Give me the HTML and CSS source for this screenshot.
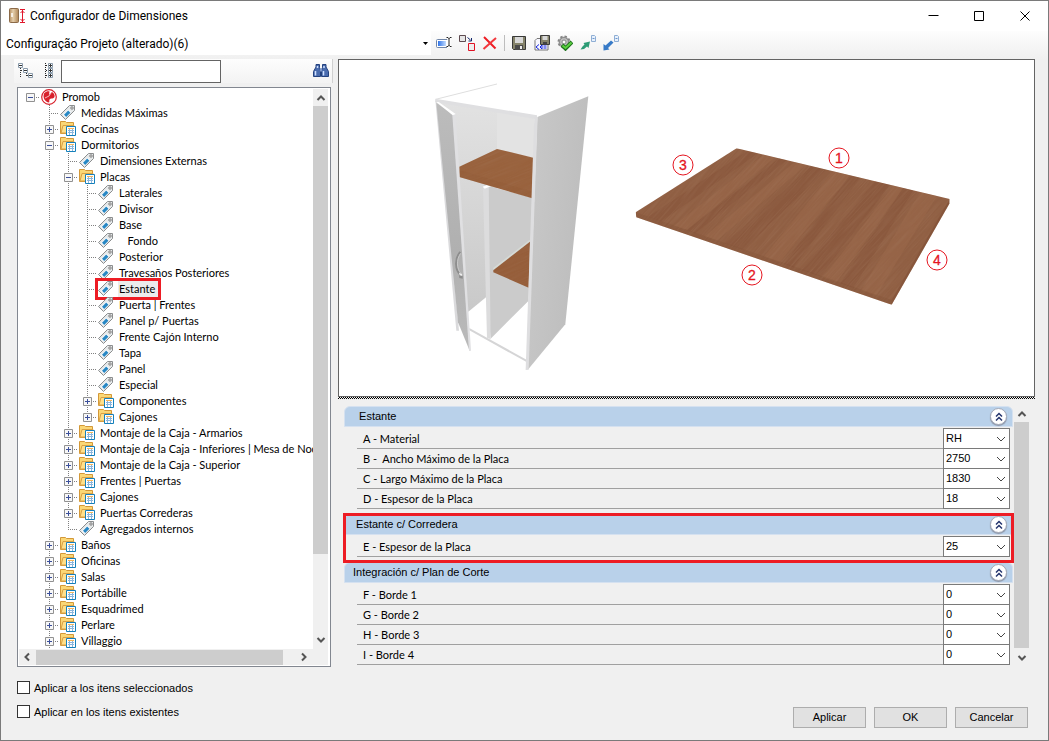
FILE: index.html
```html
<!DOCTYPE html>
<html lang="es">
	<head>
		<meta charset="UTF-8">
		<title>Configurador de Dimensiones</title>
		<link rel="stylesheet" href="styles.css">
	</head>
	<body>
		<!-- shared icons -->
		<svg class="sprite" aria-hidden="true">
			<symbol id="tag" viewBox="0 0 16 16">
				<path d="M9.500 .5h5v5L5.500 14.500 .5 9.500z" fill="#e6e9ea" stroke="#8b8d8e"/>
				<path d="M3 10L8.500 4.500l2.500 2.500-5.500 5.500z" fill="#fff"/>
				<path d="M4 9.800L8.200 5.500l2.200 2.200-4.200 4.300z" fill="#2787c4"/>
				<circle cx="12" cy="3" r="1.200" fill="#fff" stroke="#777"/>
			</symbol>
			<symbol id="folder" viewBox="0 0 16 16">
				<path d="M.5 12.500v-12h5l1 1h7v11z" fill="#fbd775" stroke="#d39838"/>
				<path d="M1 12l2-7.500h11l-1 7.500z" fill="#ffe08a" stroke="#d9a145"/>
				<path d="M6.500 5.500h9v9h-9z" fill="#fff" stroke="#1580bb"/>
				<path d="M8 7h6v1H8z" fill="#f2b55c"/>
				<path d="M8 9.500h6M8 11.500h6M9.500 8v6M12.500 8v6" stroke="#8bb6dc"/>
			</symbol>
			<symbol id="plus" viewBox="0 0 9 9">
				<path d="M.5.5h8v8h-8z" fill="#f7f7f7" stroke="#919191"/>
				<path d="M2 4.500h5M4.500 2v5" stroke="#3b4f9a"/>
			</symbol>
			<symbol id="minus" viewBox="0 0 9 9">
				<path d="M.5.5h8v8h-8z" fill="#f7f7f7" stroke="#919191"/>
				<path d="M2 4.500h5" stroke="#3b4f9a"/>
			</symbol>
			<symbol id="chevron" viewBox="0 0 10 6">
				<path d="M1 1l4 4 4-4" fill="none" stroke="#444"/>
			</symbol>
			<symbol id="arrow" viewBox="0 0 10 6">
				<path d="M1.500 5L5 1.500 8.500 5" fill="none" stroke="#555" stroke-width="2"/>
			</symbol>
			<symbol id="collapse" viewBox="0 0 10 10">
				<path d="M2 4.500l3-3 3 3M2 8.500l3-3 3 3" fill="none" stroke="#25356e" stroke-width="1.500"/>
			</symbol>
		</svg>

		<div class="window">
			<header class="titlebar">
				<svg class="app-icon" viewBox="0 0 16 16">
					<defs><linearGradient id="door"><stop offset="0" stop-color="#b58f63"/><stop offset=".4" stop-color="#e5cfac"/><stop offset="1" stop-color="#ae8556"/></linearGradient></defs>
					<rect x=".5" y=".5" width="9" height="14" rx="1" fill="url(#door)" stroke="#8b6a48"/>
					<path d="M3 5v4" stroke="#fff" stroke-width="1.500"/>
					<path d="M11 1.500h5M11 14.500h5M13.500 2v12M11.500 5l2-2 2 2M11.500 11l2 2 2-2" fill="none" stroke="#e0162b"/>
				</svg>
				<h1 class="title">Configurador de Dimensiones</h1>
				<button class="win-btn" aria-label="Minimizar"><svg viewBox="0 0 11 11"><path d="M.5 4.500h10" stroke="#000"/></svg></button>
				<button class="win-btn" aria-label="Maximizar"><svg viewBox="0 0 11 11"><path d="M.5.5h9v9h-9z" fill="none" stroke="#000"/></svg></button>
				<button class="win-btn" aria-label="Cerrar"><svg viewBox="0 0 11 11"><path d="M.5.5l9 9M9.500.5l-9 9" stroke="#000"/></svg></button>
			</header>

			<div class="toolbar">
				<div class="config">
					<select class="config-select" aria-label="Configuração"><option>Configuração Projeto (alterado)(6)</option></select>
					<svg class="config-arrow" viewBox="0 0 5 3"><path d="M0 0h5L2.500 3z"/></svg>
				</div>
				<button class="tool" aria-label="Renombrar"><svg viewBox="0 0 16 16"><defs><linearGradient id="blue"><stop offset="0" stop-color="#2f74e8"/><stop offset="1" stop-color="#c3dcff"/></linearGradient></defs><rect x=".5" y="4.500" width="13" height="8" rx="1" fill="#fff" stroke="#7186a8"/><path d="M2 6h8v5H2z" fill="url(#blue)"/><path d="M11 3h4M11 11.500h4M13 3v8" stroke="#fff" stroke-width="3"/><path d="M10.500 2.500h1.500l1 1 1-1h1.500M10.500 11.500h1.500l1-1 1 1h1.500M13 3v8" fill="none" stroke="#222"/></svg></button>
				<button class="tool" aria-label="Reemplazar"><svg viewBox="0 0 16 16"><path d="M.5.5h6v6h-6z" fill="#e6e6e6" stroke="#5e4b50"/><path d="M9.500 8.500h6v7h-6z" fill="#eee" stroke="#e01224"/><path d="M8.500 2.500l3 2.500M12.500 3v3h-3" fill="none" stroke="#14286d"/></svg></button>
				<button class="tool" aria-label="Eliminar"><svg viewBox="0 0 16 16"><path d="M2 2l11.500 11.500" stroke="#ee1b22" stroke-width="2"/><path d="M14 3L1.500 14" stroke="#f2363b" stroke-width="2"/></svg></button>
				<span class="tool-sep"></span>
				<button class="tool" aria-label="Guardar"><svg viewBox="0 0 16 16"><path d="M1.500 1.500h13v13h-12l-1-1z" fill="#85836a" stroke="#383838"/><path d="M4 2h8v6H4z" fill="#d8d8d8"/><path d="M4 10h8v5H4z" fill="#4a4a4a"/><path d="M9 11h2v3H9z" fill="#eee"/></svg></button>
				<button class="tool" aria-label="Guardar como"><svg viewBox="0 0 16 16"><path d="M1 5.500l2-2h11v11.500H1z" fill="#f7f7ff" stroke="#777"/><path d="M6.500.5h9v9h-9z" fill="#85836a" stroke="#3c3c3c"/><path d="M8.500 1h5v4h-5z" fill="#d8d8d8"/><path d="M9 7h4v2.500H9z" fill="#444"/><path d="M5 9.500l-3 2.500 3 2.500M6 12l2-2v4zM9.500 11h3M9.500 13h3" fill="none" stroke="#1526e2"/></svg></button>
				<button class="tool" aria-label="Aplicar configuración"><svg viewBox="0 0 16 16"><circle cx="7" cy="7" r="5.500" fill="#b5b5b5" stroke="#858585" stroke-width="2" stroke-dasharray="2.300 2"/><circle cx="7" cy="7" r="4.500" fill="#bdbdbd" stroke="#8b8b8b"/><circle cx="7" cy="7" r="2" fill="#fff" stroke="#888"/><path d="M5 10l3.500 3.500L15 7" fill="none" stroke="#1e721d" stroke-width="4"/><path d="M5.500 10.500l3 2.500L14.500 7.500" fill="none" stroke="#5bd13f" stroke-width="2"/></svg></button>
				<button class="tool" aria-label="Exportar"><svg viewBox="0 0 16 16"><path d="M.5 14.500l2-3 2-2-1-1.500 6.500-1.500-1.500 6.500L7 11.500l-3 2.500z" fill="#2d9c75"/><path d="M11.500.5h3l1 1v5h-4z" fill="#e8f1fc" stroke="#8faed4"/><path d="M12.500 3.500h2" stroke="#6e97ce"/></svg></button>
				<button class="tool" aria-label="Importar"><svg viewBox="0 0 16 16"><path d="M.5 15.500V9l2 1.500L8 5.500l2.500 2L5 13l1.500 1.500z" fill="#377ac7"/><path d="M11.500.5h3l1 1v5h-4z" fill="#e8f1fc" stroke="#8faed4"/><path d="M12.500 3.500h2" stroke="#6e97ce"/></svg></button>
			</div>

			<main class="main">
				<section class="side">
					<div class="searchbar">
						<button class="tool" aria-label="Contraer todo"><svg viewBox="0 0 16 16"><path d="M2.500 5v10M3 7.500h4M8.500 10v4M9 12.500h3" fill="none" stroke="#333" stroke-dasharray="1 1"/><path d="M.5.5h4v4h-4zM5.500 5.500h4v4h-4zM10.500 10.500h4v4h-4z" fill="#fff" stroke="#8a9bab"/><path d="M1 2.500h3M6 7.500h3M11 12.500h3" stroke="#333"/></svg></button>
						<button class="tool" aria-label="Expandir todo"><svg viewBox="0 0 16 16"><path d="M4.500 0v16M5 2.500h3M5 7.500h3M5 12.500h3" fill="none" stroke="#222" stroke-dasharray="1 1"/><path d="M7.500.5h4v4h-4zM7.500 5.500h4v4h-4zM7.500 10.500h4v4h-4z" fill="#fff" stroke="#8a9bab"/><path d="M8 2.500h3M8 7.500h3M8 12.500h3M9.500 1v3M9.500 6v3M9.500 11v3" stroke="#333"/></svg></button>
						<input class="search" type="text" aria-label="Buscar">
						<button class="tool tool--find" aria-label="Buscar siguiente"><svg viewBox="0 0 16 16"><path d="M3 1.500h3.500v3L7.500 7v6.500h-7v-5L3 4zM9.500 1.500H13V4l2.500 4.500v5h-7V7l1-2.500z" fill="#4a6cae" stroke="#24427f"/><path d="M7 5.500h2v3H7z" fill="#7e97c8"/><path d="M2.500 8v4.500M10.500 8v4.500M4.500 3v2M11 3v2" stroke="#cfe0ff" stroke-width="1.500"/></svg></button>
					</div>

					<div class="tree-box">
						<div class="tree-view">
							<ul class="tree">
								<li class="root"><div class="row"><span class="twig"><svg><use href="#minus"/></svg></span><span class="node"><svg viewBox="0 0 16 16"><circle cx="8" cy="8" r="7.300" fill="#fff" stroke="#d8202b" stroke-width="1.200"/><path d="M3 4.500C5 2 8 2 8.500 2.500L8 6l3-3c2 1 3 3 2.500 5-1 2-3 1-4.500 2s0 3-1 3.500C4 13 1.500 9 3 4.500z" fill="#d8202b"/><path d="M4 9l4-2 2-3" fill="none" stroke="#f7b7ba"/></svg><span class="label">Promob</span></span></div>
									<ul>
										<li><div class="row"><span class="twig"></span><span class="node"><svg><use href="#tag"/></svg><span class="label">Medidas Máximas</span></span></div></li>
										<li><div class="row"><span class="twig"><svg><use href="#plus"/></svg></span><span class="node"><svg><use href="#folder"/></svg><span class="label">Cocinas</span></span></div></li>
										<li><div class="row"><span class="twig"><svg><use href="#minus"/></svg></span><span class="node"><svg><use href="#folder"/></svg><span class="label">Dormitorios</span></span></div>
											<ul>
												<li><div class="row"><span class="twig"></span><span class="node"><svg><use href="#tag"/></svg><span class="label">Dimensiones Externas</span></span></div></li>
												<li><div class="row"><span class="twig"><svg><use href="#minus"/></svg></span><span class="node"><svg><use href="#folder"/></svg><span class="label">Placas</span></span></div>
													<ul>
														<li><div class="row"><span class="twig"></span><span class="node"><svg><use href="#tag"/></svg><span class="label">Laterales</span></span></div></li>
														<li><div class="row"><span class="twig"></span><span class="node"><svg><use href="#tag"/></svg><span class="label">Divisor</span></span></div></li>
														<li><div class="row"><span class="twig"></span><span class="node"><svg><use href="#tag"/></svg><span class="label">Base</span></span></div></li>
														<li><div class="row"><span class="twig"></span><span class="node"><svg><use href="#tag"/></svg><span class="label">   Fondo</span></span></div></li>
														<li><div class="row"><span class="twig"></span><span class="node"><svg><use href="#tag"/></svg><span class="label">Posterior</span></span></div></li>
														<li><div class="row"><span class="twig"></span><span class="node"><svg><use href="#tag"/></svg><span class="label">Travesaños Posteriores</span></span></div></li>
														<li><div class="row"><span class="twig"></span><span class="node marked"><svg><use href="#tag"/></svg><span class="label selected">Estante</span></span></div></li>
														<li><div class="row"><span class="twig"></span><span class="node"><svg><use href="#tag"/></svg><span class="label">Puerta | Frentes</span></span></div></li>
														<li><div class="row"><span class="twig"></span><span class="node"><svg><use href="#tag"/></svg><span class="label">Panel p/ Puertas</span></span></div></li>
														<li><div class="row"><span class="twig"></span><span class="node"><svg><use href="#tag"/></svg><span class="label">Frente Cajón Interno</span></span></div></li>
														<li><div class="row"><span class="twig"></span><span class="node"><svg><use href="#tag"/></svg><span class="label">Tapa</span></span></div></li>
														<li><div class="row"><span class="twig"></span><span class="node"><svg><use href="#tag"/></svg><span class="label">Panel</span></span></div></li>
														<li><div class="row"><span class="twig"></span><span class="node"><svg><use href="#tag"/></svg><span class="label">Especial</span></span></div></li>
														<li><div class="row"><span class="twig"><svg><use href="#plus"/></svg></span><span class="node"><svg><use href="#folder"/></svg><span class="label">Componentes</span></span></div></li>
														<li class="last"><div class="row"><span class="twig"><svg><use href="#plus"/></svg></span><span class="node"><svg><use href="#folder"/></svg><span class="label">Cajones</span></span></div></li>
													</ul>
												</li>
												<li><div class="row"><span class="twig"><svg><use href="#plus"/></svg></span><span class="node"><svg><use href="#folder"/></svg><span class="label">Montaje de la Caja - Armarios</span></span></div></li>
												<li><div class="row"><span class="twig"><svg><use href="#plus"/></svg></span><span class="node"><svg><use href="#folder"/></svg><span class="label">Montaje de la Caja - Inferiores | Mesa de Noche</span></span></div></li>
												<li><div class="row"><span class="twig"><svg><use href="#plus"/></svg></span><span class="node"><svg><use href="#folder"/></svg><span class="label">Montaje de la Caja - Superior</span></span></div></li>
												<li><div class="row"><span class="twig"><svg><use href="#plus"/></svg></span><span class="node"><svg><use href="#folder"/></svg><span class="label">Frentes | Puertas</span></span></div></li>
												<li><div class="row"><span class="twig"><svg><use href="#plus"/></svg></span><span class="node"><svg><use href="#folder"/></svg><span class="label">Cajones</span></span></div></li>
												<li><div class="row"><span class="twig"><svg><use href="#plus"/></svg></span><span class="node"><svg><use href="#folder"/></svg><span class="label">Puertas Correderas</span></span></div></li>
												<li class="last"><div class="row"><span class="twig"></span><span class="node"><svg><use href="#tag"/></svg><span class="label">Agregados internos</span></span></div></li>
											</ul>
										</li>
										<li><div class="row"><span class="twig"><svg><use href="#plus"/></svg></span><span class="node"><svg><use href="#folder"/></svg><span class="label">Baños</span></span></div></li>
										<li><div class="row"><span class="twig"><svg><use href="#plus"/></svg></span><span class="node"><svg><use href="#folder"/></svg><span class="label">Oficinas</span></span></div></li>
										<li><div class="row"><span class="twig"><svg><use href="#plus"/></svg></span><span class="node"><svg><use href="#folder"/></svg><span class="label">Salas</span></span></div></li>
										<li><div class="row"><span class="twig"><svg><use href="#plus"/></svg></span><span class="node"><svg><use href="#folder"/></svg><span class="label">Portábille</span></span></div></li>
										<li><div class="row"><span class="twig"><svg><use href="#plus"/></svg></span><span class="node"><svg><use href="#folder"/></svg><span class="label">Esquadrimed</span></span></div></li>
										<li><div class="row"><span class="twig"><svg><use href="#plus"/></svg></span><span class="node"><svg><use href="#folder"/></svg><span class="label">Perlare</span></span></div></li>
										<li><div class="row"><span class="twig"><svg><use href="#plus"/></svg></span><span class="node"><svg><use href="#folder"/></svg><span class="label">Villaggio</span></span></div></li>
									</ul>
								</li>
							</ul>
						</div>
						<div class="vscroll">
							<svg class="up"><use href="#arrow"/></svg>
							<div class="thumb tree-thumb"></div>
							<svg class="down"><use href="#arrow"/></svg>
						</div>
						<div class="hscroll">
							<svg class="left"><use href="#arrow"/></svg>
							<div class="thumb hthumb"></div>
							<svg class="right"><use href="#arrow"/></svg>
						</div>
					</div>

					<div class="checks">
						<label class="check"><input type="checkbox">Aplicar a los itens seleccionados</label>
						<label class="check"><input type="checkbox">Aplicar en los itens existentes</label>
					</div>
				</section>

				<section class="content">
					<div class="preview">
						<svg class="drawing" viewBox="0 0 695 336" role="img" aria-label="Estante">
							<defs>
								<linearGradient id="side" x1="0" x2="1" y2=".4"><stop offset="0" stop-color="#c9c9c9"/><stop offset="1" stop-color="#bdbdbd"/></linearGradient>
								<linearGradient id="leaf" x2="0" y2="1"><stop offset="0" stop-color="#bcbcbc"/><stop offset=".6" stop-color="#b0b0b0"/><stop offset="1" stop-color="#bababa"/></linearGradient>
								<linearGradient id="inner" x2="0" y2="1"><stop offset="0" stop-color="#e2e2e2"/><stop offset="1" stop-color="#c9c9c9"/></linearGradient>
								<filter id="grain" x="0" y="0" width="1" height="1">
									<feTurbulence type="fractalNoise" baseFrequency=".008 .28" numOctaves="3" seed="4"/>
									<feColorMatrix values="0 0 0 0 .38  0 0 0 0 .2  0 0 0 0 .12  1.800 0 0 0 -.65"/>
								</filter>
								<clipPath id="board"><path d="M350 55L989 207V220L815 524 49 262 47 247z"/></clipPath>
								<clipPath id="shelves"><path d="M178 290l113-53 109 26-3 122-219-64zM280 601l110-86-4 138-106-46z"/></clipPath>
							</defs>

							<!-- cabinet -->
							<g transform="translate(61 10) scale(.3333)">
								<path d="M107 88L291 42" stroke="#dedede" stroke-width="3"/>
								<path d="M112 95L291 125V655L205 725 160 640z" fill="url(#inner)"/>
								<path d="M291 125L403 145V264L291 240z" fill="#e3e3e3"/>
								<path d="M266 348L397 383 386 692 272 806 262 700z" fill="#cbcbcb"/>
								<path d="M249 352L266 350 272 808 261 803z" fill="#dcdcdd"/>
								<path d="M248 350L262 345 272 349 254 356z" fill="#fff"/>
								<path d="M280 597L390 512" stroke="#d5dad6" stroke-width="5"/>
								<path d="M280 601L390 515 386 653 280 607z" fill="#965e3a"/>
								<path d="M178 290L291 237 400 263 397 385 178 321z" fill="#99623d"/>
								<path d="M178 321L397 385 397 365 178 300z" fill="#8b5432" opacity=".2"/>
								<g clip-path="url(#shelves)"><rect x="100" y="200" width="500" height="600" transform="rotate(-22 250 350)" filter="url(#grain)" opacity=".25"/></g>
								<path d="M208 774L381 870V877L208 781z" fill="#d5d5d6"/>
								<path d="M106 86L411 136V148L106 97z" fill="#dfdfe1"/>
								<path d="M412 141L565 79 496 763 383 900z" fill="url(#side)"/>
								<path d="M403 139L413 141 386 899 377 900z" fill="#dedee0"/>
								<path d="M106 90L113 98 177 782H169z" fill="#dadadc"/>
								<path d="M109 98L160 134 209 842 174 757z" fill="url(#leaf)"/>
								<path d="M109 96L116 96 167 132 160 137z" fill="#fff"/>
								<path d="M157 136L167 133 213 842 207 843z" fill="#e0e0e2"/>
								<path d="M181 546C163 565 165 600 182 615" fill="none" stroke="#8d8d8d" stroke-width="6"/>
								<path d="M182 550C168 569 170 596 183 611" fill="none" stroke="#c8c8c8" stroke-width="3"/>
								<path d="M176 608l12 5v13l-10-2z" fill="#8c8c8c"/>
								<path d="M177 608l10 4v6l-8-2z" fill="#eee"/>
							</g>

							<!-- shelf board -->
							<g transform="translate(281 70) scale(.3333)">
								<g clip-path="url(#board)">
									<path d="M0 0H1050V600H0z" fill="#905f43"/>
									<g fill="#804c35" opacity=".3">
										<path d="M85 260L382 63 414 70 124 274z"/>
										<path d="M201 300L478 85 500 90 225 310z"/>
										<path d="M316 340L574 108 618 119 370 359z"/>
										<path d="M492 401L690 136 721 143 520 412z"/>
										<path d="M546 420L765 154 810 164 600 439z"/>
										<path d="M661 460L850 173 880 181 700 474z"/>
									</g>
									<g fill="#a67453" opacity=".25">
										<path d="M162 287L430 74 465 83 201 300z"/>
										<path d="M254 319L523 96 560 105 290 332z"/>
										<path d="M431 380L640 124 690 136 480 397z"/>
										<path d="M610 443L820 166 850 173 650 457z"/>
										<path d="M723 481L900 187 951 198 769 497z"/>
									</g>
									<rect x="-100" y="-300" width="1300" height="1200" transform="rotate(-48 500 300)" filter="url(#grain)" opacity=".35"/>
									<path d="M47 247L815 510V530L47 265z" fill="#6f4028" opacity=".15"/>
									<path d="M989 207L815 510V528L989 222z" fill="#6f4028" opacity=".3"/>
								</g>
							</g>

							<g class="marks">
								<circle cx="500" cy="98" r="10"/><text x="500" y="103">1</text>
								<circle cx="413" cy="215" r="10"/><text x="413" y="220">2</text>
								<circle cx="344" cy="105" r="10"/><text x="344" y="110">3</text>
								<circle cx="598" cy="200" r="10"/><text x="598" y="205">4</text>
							</g>
						</svg>
					</div>
					<div class="splitter"></div>

					<div class="props">
						<div class="groups">
							<section class="group">
								<h2 class="group-head"><span>  Estante</span><button class="fold" aria-label="Contraer Estante"><svg><use href="#collapse"/></svg></button></h2>
								<div class="field"><label for="a">A - Material</label><span class="combo"><select id="a"><option>RH</option></select><svg><use href="#chevron"/></svg></span></div>
								<div class="field"><label for="b">B -  Ancho Máximo de la Placa</label><span class="combo"><select id="b"><option>2750</option></select><svg><use href="#chevron"/></svg></span></div>
								<div class="field"><label for="c">C - Largo Máximo de la Placa</label><span class="combo"><select id="c"><option>1830</option></select><svg><use href="#chevron"/></svg></span></div>
								<div class="field"><label for="d">D - Espesor de la Placa</label><span class="combo"><select id="d"><option>18</option></select><svg><use href="#chevron"/></svg></span></div>
							</section>
							<section class="group group--marked">
								<h2 class="group-head"><span> Estante c/ Corredera</span><button class="fold" aria-label="Contraer Estante c/ Corredera"><svg><use href="#collapse"/></svg></button></h2>
								<div class="field"><label for="e">E - Espesor de la Placa</label><span class="combo"><select id="e"><option>25</option></select><svg><use href="#chevron"/></svg></span></div>
							</section>
							<section class="group">
								<h2 class="group-head"><span>Integración c/ Plan de Corte</span><button class="fold" aria-label="Contraer Integración"><svg><use href="#collapse"/></svg></button></h2>
								<div class="field"><label for="f">F - Borde 1</label><span class="combo"><select id="f"><option>0</option></select><svg><use href="#chevron"/></svg></span></div>
								<div class="field"><label for="g">G - Borde 2</label><span class="combo"><select id="g"><option>0</option></select><svg><use href="#chevron"/></svg></span></div>
								<div class="field"><label for="h">H - Borde 3</label><span class="combo"><select id="h"><option>0</option></select><svg><use href="#chevron"/></svg></span></div>
								<div class="field"><label for="i">I - Borde 4</label><span class="combo"><select id="i"><option>0</option></select><svg><use href="#chevron"/></svg></span></div>
							</section>
						</div>
						<div class="vscroll">
							<svg class="up"><use href="#arrow"/></svg>
							<div class="thumb props-thumb"></div>
							<svg class="down"><use href="#arrow"/></svg>
						</div>
					</div>

					<div class="actions">
						<button class="btn">Aplicar</button>
						<button class="btn">OK</button>
						<button class="btn">Cancelar</button>
					</div>
				</section>
			</main>
		</div>
	</body>
</html>
```
FILE: styles.css
```css
* {
	box-sizing: border-box;
}
body {
	margin: 0;
	background: #f0f0f0;
	color: #000;
	font-family: "Liberation Sans", Arial, sans-serif;
	font-size: 11px;
}
svg {
	display: block;
	flex: none;
}
button, select, input {
	margin: 0;
	padding: 0;
	border: 0;
	border-radius: 0;
	background: none;
	color: inherit;
	font: inherit;
}
select, input {
	appearance: none;
	-webkit-appearance: none;
}
.sprite {
	position: absolute;
	width: 0;
	height: 0;
}
.window {
	display: flex;
	flex-direction: column;
	min-height: 100vh;
	border: 1px solid #7a7a7a;
}

/* title bar */
.titlebar {
	display: flex;
	align-items: center;
	height: 30px;
	padding-left: 8px;
	background: #fff;
}
.app-icon {
	width: 16px;
	height: 16px;
}
.title {
	flex: 1;
	margin: 0 0 0 5px;
	font: 12px Roboto, "Noto Sans", sans-serif;
}
.win-btn {
	display: flex;
	align-items: center;
	justify-content: center;
	width: 46px;
	height: 30px;
}
.win-btn svg {
	width: 11px;
	height: 11px;
}

/* toolbar */
.toolbar {
	display: flex;
	align-items: flex-start;
	height: 28px;
	background: linear-gradient(#fdfdfd, #f0f0f0);
}
.config {
	display: grid;
	grid-template-columns: 1fr 11px;
	align-items: center;
	width: 430px;
	height: 24px;
	margin-right: 1px;
	background: #fff;
}
.config-select {
	grid-area: 1 / 1 / 2 / 3;
	height: 24px;
	padding: 2px 0 0 5px;
	font: 12px Roboto, "Noto Sans", sans-serif;
}
.config-arrow {
	grid-area: 1 / 2;
	justify-self: center;
	width: 5px;
	height: 3px;
	pointer-events: none;
}
.tool {
	display: flex;
	align-items: center;
	justify-content: center;
	width: 23px;
	height: 24px;
}
.tool svg {
	width: 16px;
	height: 16px;
}
.tool-sep {
	width: 1px;
	height: 16px;
	margin: 4px 2px 0 3px;
	background: #bdbdbd;
}

/* columns */
.main {
	flex: 1;
	display: grid;
	grid-template-columns: 314px 1fr;
	gap: 7px;
	padding: 0 13px 12px 16px;
}
.searchbar {
	display: flex;
	align-items: center;
	height: 24px;
	margin: 0 -2px 4px -3px;
	background: linear-gradient(#fdfdfd, #f3f3f3);
	border-right: 1px solid #d0d0d0;
}
.search {
	width: 160px;
	height: 23px;
	margin: 0 auto 0 1px;
	padding: 0 4px;
	border: 1px solid #646464;
	background: #fff;
}

/* tree */
.tree-box {
	display: grid;
	grid-template-columns: 1fr 15px;
	grid-template-rows: auto 16px;
	padding: 1px 2px 1px 1px;
	border: 1px solid #828790;
	background: #fff;
}
.tree-view {
	overflow: hidden;
	padding-left: 2px;
	font-family: Lato, "Liberation Sans", sans-serif;
}
.tree, .tree ul {
	margin: 0;
	padding: 0;
	list-style: none;
}
.tree ul {
	padding-left: 19px;
}
.tree li {
	background: linear-gradient(#808080 50%, transparent 50%) 9px 0 / 1px 2px repeat-y;
}
.tree li.root,
.tree li.last {
	background: none;
}
.row {
	display: flex;
	height: 16px;
	line-height: 16px;
	white-space: pre;
}
.twig {
	display: flex;
	align-items: center;
	flex: none;
	width: 19px;
	margin-right: 1px;
	padding-left: 5px;
	background: linear-gradient(90deg, #808080 50%, transparent 50%) 9px 8px / 2px 1px repeat-x;
	background-clip: content-box;
}
/* dots start at the trunk, not at the edge of the cell */
.twig:empty {
	padding-left: 9px;
}
.twig svg {
	width: 9px;
	height: 9px;
}
.last > .row {
	background: repeating-linear-gradient(#808080 0 1px, transparent 1px 2px) 9px 0 / 1px 9px no-repeat;
}
.node {
	display: flex;
}
.node svg {
	width: 16px;
	height: 16px;
}
.label {
	margin-left: 4px;
	padding: 0 3px 0 1px;
}
.selected {
	background: #ececec;
}
.marked {
	outline: 3px solid #ed1c24;
}

/* scrollbars */
.vscroll {
	display: flex;
	flex-direction: column;
	align-items: center;
	background: #f0f0f0;
}
.vscroll svg, .hscroll svg {
	width: 10px;
	height: 6px;
}
.up {
	margin: 6px 0 5px;
}
.down {
	margin: auto 0 6px;
	transform: rotate(180deg);
}
.left {
	margin: 0 4px 0 3px;
	transform: rotate(-90deg);
}
.right {
	margin: 0 2px 0 auto;
	transform: rotate(90deg);
}
.thumb {
	background: #cdcdcd;
}
.tree-thumb {
	width: 15px;
	height: 80%;
}
.hscroll {
	grid-column: 1 / 3;
	display: flex;
	align-items: center;
	padding-right: 17px;
	background: #f0f0f0;
}
.hthumb {
	width: 247px;
	height: 15px;
}

.checks {
	display: grid;
	gap: 11px;
	margin-top: 14px;
}
.check {
	display: flex;
	align-items: center;
	gap: 4px;
	height: 13px;
	line-height: 12px;
}
.check input {
	width: 13px;
	height: 13px;
	border: 1px solid #333;
	background: #fff;
}
.check input:checked {
	background: #333;
}

/* preview */
.content {
	display: flex;
	flex-direction: column;
}
.preview {
	border: 1px solid #646464;
	background: #fff;
}
.drawing {
	width: 100%;
	height: auto;
}
.marks circle {
	fill: none;
	stroke: #e5151f;
}
.marks text {
	fill: #e5151f;
	stroke: #e5151f;
	stroke-width: .3px;
	font-size: 14px;
	text-anchor: middle;
}
.splitter {
	height: 2px;
	background: repeating-conic-gradient(#000 0 25%, #f0f0f0 0 50%) 0 0 / 2px 2px;
}

/* properties */
.props {
	display: flex;
	margin: 6px 6px 0;
}
.props .vscroll {
	width: 15px;
}
.props .down {
	margin-bottom: 4px;
}
.props-thumb {
	width: 15px;
	height: 226px;
}
.groups {
	flex: 1;
	padding-top: 1px;
	margin-right: 1px;
}
.group {
	padding-bottom: 5px;
}
.group:last-child {
	padding-bottom: 0;
}
.group--marked {
	outline: 3px solid #ed1c24;
	outline-offset: -2px;
}
.group-head {
	display: flex;
	align-items: center;
	justify-content: space-between;
	height: 21px;
	margin: 0 0 2px;
	padding: 0 5px 0 8px;
	border: 1px solid #d5e1f0;
	border-radius: 6px 6px 0 0;
	background: #b9d1ea;
	font-size: 11px;
	font-weight: normal;
	line-height: 18px;
	white-space: pre;
}
.group-head span {
	align-self: flex-start;
}
.fold {
	display: flex;
	align-items: center;
	justify-content: center;
	width: 17px;
	height: 17px;
	border: 1px solid #a3a9b8;
	border-radius: 50%;
	background: #fff;
	box-shadow: 0 1px 1px #8a93a5;
}
.fold svg {
	width: 10px;
	height: 10px;
}
.field {
	display: flex;
	height: 20px;
	margin: 0 3px 0 13px;
}
.field label {
	flex: 1;
	padding-left: 6px;
	border-bottom: 1px solid #a0a0a0;
	font-family: Lato, "Liberation Sans", sans-serif;
	line-height: 20px;
	white-space: pre;
}
.combo {
	display: grid;
	grid-template-columns: 1fr 16px;
	align-items: center;
	width: 67px;
	height: 21px;
	margin-top: -1px;
}
.combo select {
	grid-area: 1 / 1 / 2 / 3;
	height: 21px;
	padding: 0 16px 2px 2px;
	border: 1px solid #7a7a7a;
	background: #fff;
}
.combo svg {
	grid-area: 1 / 2;
	position: relative;
	width: 10px;
	height: 6px;
	margin-left: 2px;
	pointer-events: none;
}

.actions {
	display: flex;
	justify-content: flex-end;
	gap: 8px;
	margin: auto 7px 0 0;
}
.btn {
	width: 73px;
	height: 21px;
	padding-bottom: 2px;
	border: 1px solid #adadad;
	background: #e1e1e1;
}
```
